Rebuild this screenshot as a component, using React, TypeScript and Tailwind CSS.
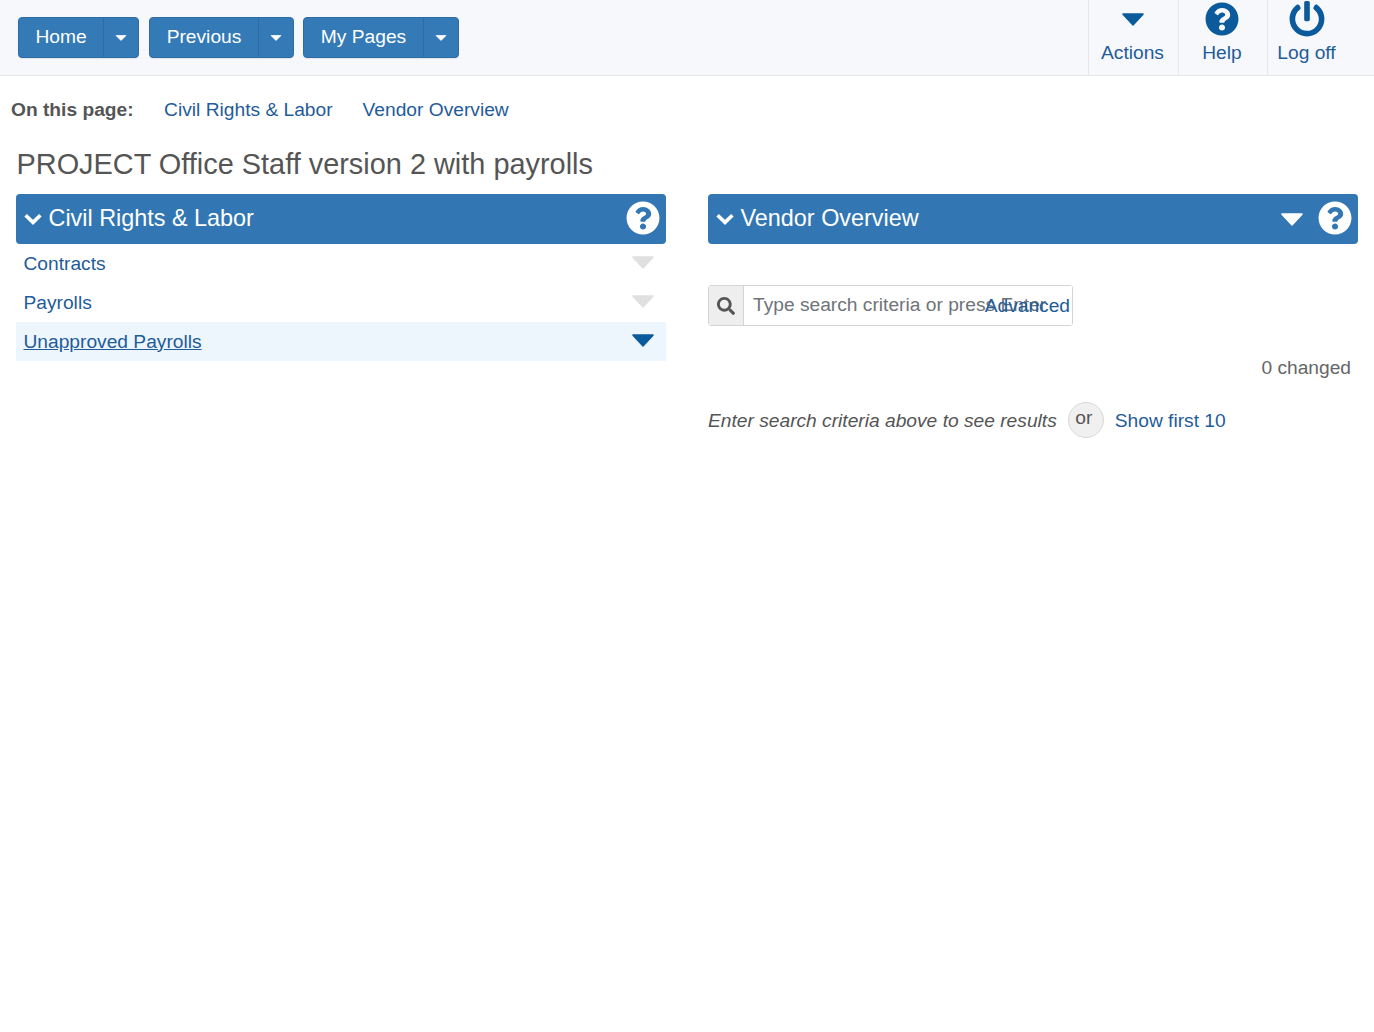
import React from "react";
import { FaQuestionCircle, FaPowerOff, FaSearch } from "react-icons/fa";

function Caret({ w, h, color }: { w: number; h: number; color: string }) {
  return (
    <svg width={w} height={h} viewBox="0 0 24 12" preserveAspectRatio="none" className="block" fill={color} stroke={color} strokeLinejoin="round" strokeWidth="1.5">
      <path d="M2 1 H22 L12 11 Z" />
    </svg>
  );
}

function Chevron() {
  return (
    <svg width="18" height="12" viewBox="0 0 18 12" className="mr-[7px] block" fill="none" stroke="#ffffff" strokeWidth="3.6" strokeLinejoin="miter">
      <path d="M1.6 2.2 L9 9.4 L16.4 2.2" />
    </svg>
  );
}

function SplitButton({ label, w, caretW, className }: { label: string; w: number; caretW: number; className?: string }) {
  return (
    <div className={`flex h-[41px] rounded-[4px] border border-[#2e6da4] bg-[#337ab7] text-white shadow-[0_1px_1px_rgba(0,0,0,0.08)] ${className ?? ""}`}>
      <div className="flex items-center justify-center border-r border-[#2e6da4]" style={{ width: w }}>{label}</div>
      <div className="flex items-center justify-center" style={{ width: caretW }}>
        <Caret w={12} h={6} color="#ffffff" />
      </div>
    </div>
  );
}

function NavItem({ label, w, children }: { label: string; w: number; children: React.ReactNode }) {
  return (
    <div className="flex h-[75px] flex-col items-center border-l border-[#e5e7ea] pr-[2px] text-[#0b5a9b]" style={{ width: w }}>
      <div className="flex h-[38px] w-full items-center justify-center">{children}</div>
      <div className="mt-[2px] leading-[25px] text-[#1f5c99]">{label}</div>
    </div>
  );
}

function Row({ label, active }: { label: string; active?: boolean }) {
  return (
    <div className={`flex h-[39px] items-center justify-between pl-[7.5px] pr-[11px] ${active ? "bg-[#edf5fd]" : ""}`}>
      <a className={`pt-[1px] text-[#1f5c99] ${active ? "underline" : ""}`}>{label}</a>
      <div className="mb-[3px]">
        <Caret w={24} h={13} color={active ? "#0b5a9b" : "#e0e0e0"} />
      </div>
    </div>
  );
}

function PanelHeader({ title, caret }: { title: string; caret?: boolean }) {
  return (
    <div className="flex h-[50px] items-center rounded-[4px] bg-[#3276b4] pl-[7.5px] pr-[6px] text-white">
      <div className="mb-[1px]">
        <Chevron />
      </div>
      <div className="flex-1 text-[23.4px] leading-[46px] mb-[2px]">{title}</div>
      {caret && (
        <div className="mr-[14px]">
          <Caret w={24} h={13} color="#ffffff" />
        </div>
      )}
      <FaQuestionCircle className="mb-[2px] h-[34px] w-[34px]" />
    </div>
  );
}

export default function App() {
  return (
    <div className="min-h-[1032px] bg-white text-[19.2px] text-[#555] [font-family:'Liberation_Sans',Arial,sans-serif]">
      <header className="flex h-[76px] items-start justify-between border-b border-[#e5e7ea] bg-[#f6f8fb] pl-[18px] pr-[27px]">
        <div className="mt-[17px] flex gap-[10px]">
          <SplitButton label="Home" w={85} caretW={34} />
          <SplitButton label="Previous" w={109} caretW={34} />
          <SplitButton label="My Pages" w={120} caretW={34} className="-ml-[1px]" />
        </div>
        <div className="flex">
          <NavItem label="Actions" w={90}>
            <Caret w={24} h={13} color="#0b5a9b" />
          </NavItem>
          <NavItem label="Help" w={89}>
            <FaQuestionCircle className="h-[34px] w-[34px]" />
          </NavItem>
          <NavItem label="Log off" w={80}>
            <FaPowerOff className="h-[36px] w-[36px]" />
          </NavItem>
        </div>
      </header>

      <div className="flex h-[68px] items-center pl-[11px]">
        <b className="mr-[30.5px] text-[#555]">On this page:</b>
        <a className="mr-[30px] text-[#1f5c99]">Civil Rights &amp; Labor</a>
        <a className="text-[#1f5c99]">Vendor Overview</a>
      </div>

      <div className="px-4">
        <h1 className="mt-[2px] mb-[12px] pl-[0.5px] text-[28.9px] leading-[36px] text-[#555]">PROJECT Office Staff version 2 with payrolls</h1>
        <div className="grid grid-cols-2 gap-[42px]">
          <section>
            <PanelHeader title="Civil Rights & Labor" />
            <Row label="Contracts" />
            <Row label="Payrolls" />
            <Row label="Unapproved Payrolls" active />
          </section>
          <section>
            <PanelHeader title="Vendor Overview" caret />
            <div className="relative mt-[41px] flex h-[41px] w-[365px] rounded-[3px] border border-[#d4d4d4]">
              <div className="flex w-[35px] items-center justify-center border-r border-[#d4d4d4] bg-[#eeeeee] text-[#555]">
                <FaSearch className="h-[18px] w-[18px]" />
              </div>
              <input
                readOnly
                placeholder="Type search criteria or press Enter"
                className="min-w-0 flex-1 bg-white pl-[9px] text-[19.2px] outline-none placeholder:text-[#6f7479]"
              />
              <a className="absolute right-[2px] top-[6px] text-[#1f5c99]">Advanced</a>
            </div>
            <div className="mt-[29px] pr-[7px] text-right leading-[25px] text-[#666]">0 changed</div>
            <div className="mt-[22px] flex items-center">
              <i className="pt-[2px] text-[#555]">Enter search criteria above to see results</i>
              <div className="ml-[11px] flex h-[36px] w-[36px] items-start justify-center rounded-full border border-[#d9d9d9] bg-[#f0f0f0] pt-[2px] pr-[4px] leading-[25px]">or</div>
              <a className="ml-[11px] pt-[2px] text-[#1f5c99]">Show first 10</a>
            </div>
          </section>
        </div>
      </div>
    </div>
  );
}
